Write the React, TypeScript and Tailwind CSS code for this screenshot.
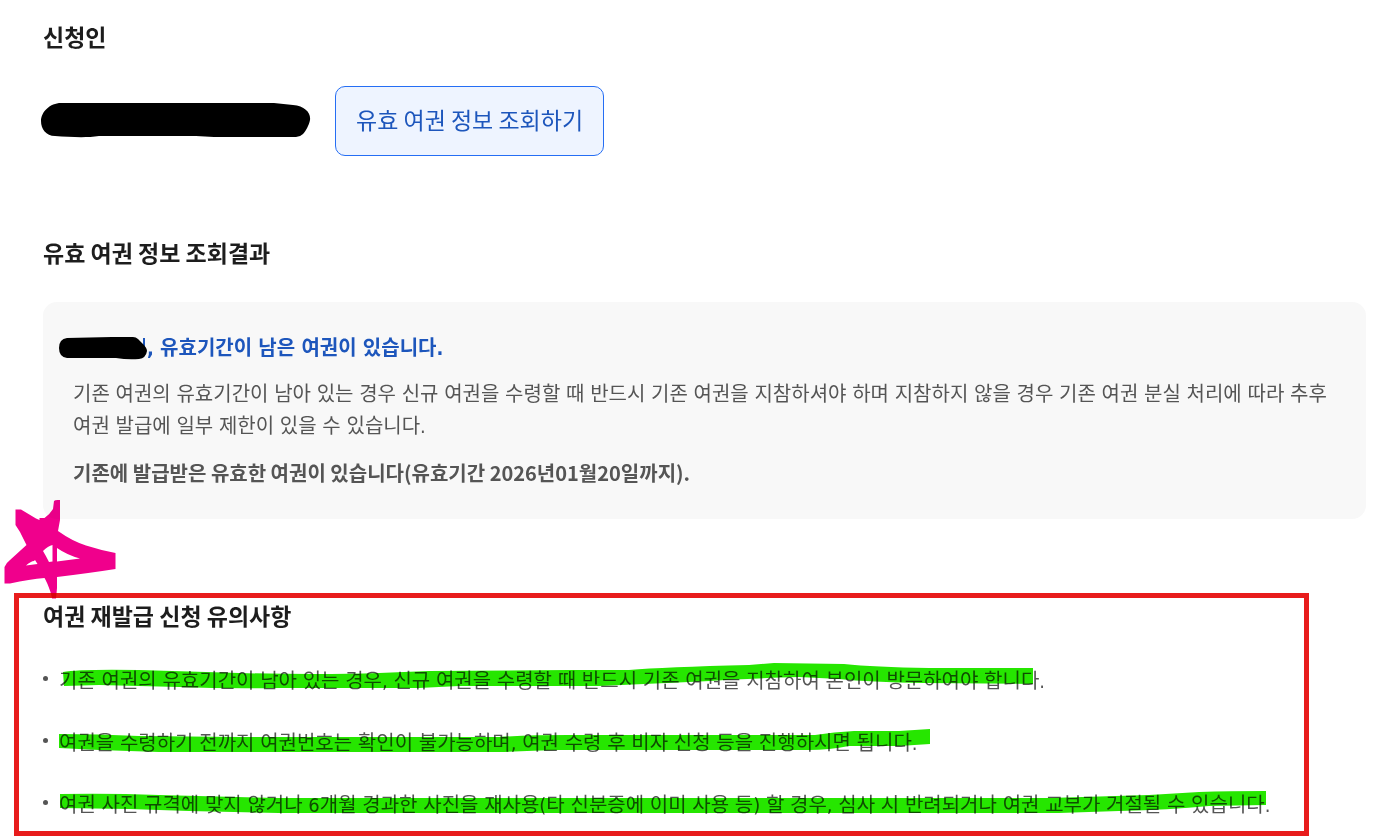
const highlights = [
  {
    text: '기존 여권의 유효기간이 남아 있는 경우, 신규 여권을 수령할 때 반드시 기존 여권을 지참하여 본인이 방문하여야 합니다.',
    d: 'M4 8 Q20 5 80 6 L180 9 Q260 11 320 9 L370 7 L510 6 L570 6 Q605 3 690 1 L715 -1 L785 0 Q815 3 870 4 L974 4 V20 L865 19 Q810 18 780 15 L740 13 Q700 14 630 18 L540 22 L400 22 L360 24 L220 24 Q170 25 120 23 L40 21 L5 22 Z',
  },
  {
    text: '여권을 수령하기 전까지 여권번호는 확인이 불가능하며, 여권 수령 후 비자 신청 등을 진행하시면 됩니다.',
    d: 'M0 8 Q40 8 80 10 L180 11 L440 11 Q470 9 510 9 L756 9 Q775 6 795 5 L840 5 L871 3 V18 L840 20 L790 20 Q770 24 750 24 L500 24 Q470 25 440 26 L180 26 L100 26 L40 24 L0 22 Z',
  },
  {
    text: '여권 사진 규격에 맞지 않거나 6개월 경과한 사진을 재사용(타 신분증에 이미 사용 등) 할 경우, 심사 시 반려되거나 여권 교부가 거절될 수 있습니다.',
    d: 'M1 6 Q50 5 100 7 L220 10 L990 10 L1090 7 L1140 4 Q1170 3 1207 3 V17 L1150 18 Q1110 22 1060 23 L1000 25 L220 25 L130 23 L70 21 L1 20 Z',
  },
];

export default function App() {
  return (
    <main className="min-h-screen overflow-hidden bg-white pt-[19px] font-['Noto_Sans_CJK_KR',sans-serif] text-[20px] leading-[32px] break-keep text-[#555555]">
      <section className="px-[43px]">
        <h2 className="text-[23px] leading-[34px] font-bold text-[#1d1d1d]">신청인</h2>
        <div className="mt-[33px] flex items-center gap-6">
          <svg className="-ml-[2px] shrink-0" width="270" height="36" viewBox="0 0 270 36" aria-hidden="true">
            <path d="M20 0 H233 L252 2 C264 3 270 10 269 17 C268 22 265 28 262 31 Q259 34 255 34 H173 L155 33 H58 C45 35 29 34 14 33 C5 33 0 26 0 18 C0 9 9 0 20 0 Z" />
          </svg>
          <button
            type="button"
            className="h-[70px] rounded-[10px] border border-[#256ef4] bg-[#eef4ff] px-5 pb-1 text-[23px] leading-[34px] text-[#1d56bc]"
          >
            유효 여권 정보 조회하기
          </button>
        </div>
      </section>

      <section className="mt-[79px] pr-[19px] pl-[43px]">
        <h2 className="text-[23px] leading-[34px] font-bold text-[#1d1d1d]">유효 여권 정보 조회결과</h2>
        <div className="mt-[33px] rounded-[14px] bg-[#f8f8f8] px-[30px] py-[30px]">
          <p className="flex items-center font-['DejaVu_Sans_Condensed','Noto_Sans_CJK_KR',sans-serif] font-bold text-[#1d56bc]">
            <svg className="-ml-[14px] shrink-0" width="88" height="24" viewBox="0 0 88 24" aria-hidden="true">
              <path fill="#1d56bc" d="M84 2 H86 V16 H84 Z" />
              <path d="M8 2 L53 1 H74 Q77 1 79 3 L84 8 Q88 12 88 15 Q87 22 80 23 Q69 24 57 22 H8 Q0 21 0 12 Q0 3 8 2 Z" />
            </svg>
            <span>, 유효기간이 남은 여권이 있습니다.</span>
          </p>
          <p className="mt-[14px] font-['DejaVu_Sans_Condensed','Noto_Sans_CJK_KR',sans-serif]">
            기존 여권의 유효기간이 남아 있는 경우 신규 여권을 수령할 때 반드시 기존 여권을 지참하셔야 하며 지참하지 않을 경우 기존 여권 분실 처리에 따라 추후 여권 발급에 일부 제한이 있을 수 있습니다.
          </p>
          <p className="mt-[15px] font-bold">
            기존에 발급받은 유효한 여권이 있습니다(유효기간 2026년01월20일까지).
          </p>
        </div>
      </section>

      <section className="relative mt-[74px] mr-[76px] ml-[14px] border-[5px] border-[#e81c1c] px-6 pb-[10px]">
        <svg
          className="pointer-events-none absolute -top-[99px] -left-[15px] mix-blend-multiply"
          width="112"
          height="100"
          viewBox="4 499 112 100"
          aria-hidden="true"
        >
          <path
            fill="#f0008c"
            fillRule="evenodd"
            d="M15.5 509.500 H21 L36 518.500 L39.500 520 V518 H44.500 Q50 514 53 509 L54 501 Q55 499.500 60 500 V520 L58 531 Q72 541 86 545.500 Q100 550 115.500 553 V569 Q90 573 57 577 V588 L56 598.500 H52 L50.500 592 Q47 582 44.500 578 Q30 579 10 583.500 H4.500 V567 Q6 563 10 560 L26.500 545 L20 532 L15.500 525 Z M43 551 Q48 546 52.500 545 V561.500 L49 562 Q46 556 43 551 Z M57 548 Q67 555 80 558.500 L57 561.500 Z M26 565.500 Q31 561 34 561 L35 560 L37.500 564 Z"
          />
        </svg>
        <h2 className="text-[23px] leading-[34px] font-bold text-[#1d1d1d]">여권 재발급 신청 유의사항</h2>
        <ul className="mt-[33px] flex flex-col gap-[30px] font-['DejaVu_Sans_Condensed','Noto_Sans_CJK_KR',sans-serif]">
          {highlights.map(({ text, d }) => (
            <li key={text} className="flex">
              <span className="mt-[11px] mr-[11px] size-[5px] shrink-0 rounded-full bg-[#555555]" />
              <span className="relative">
                {text}
                <svg
                  className="pointer-events-none absolute top-0 left-0 overflow-visible mix-blend-multiply"
                  width="1208"
                  height="28"
                  viewBox="0 1 1208 28"
                  aria-hidden="true"
                >
                  <path fill="#26e600" d={d} />
                </svg>
              </span>
            </li>
          ))}
        </ul>
      </section>
    </main>
  );
}
